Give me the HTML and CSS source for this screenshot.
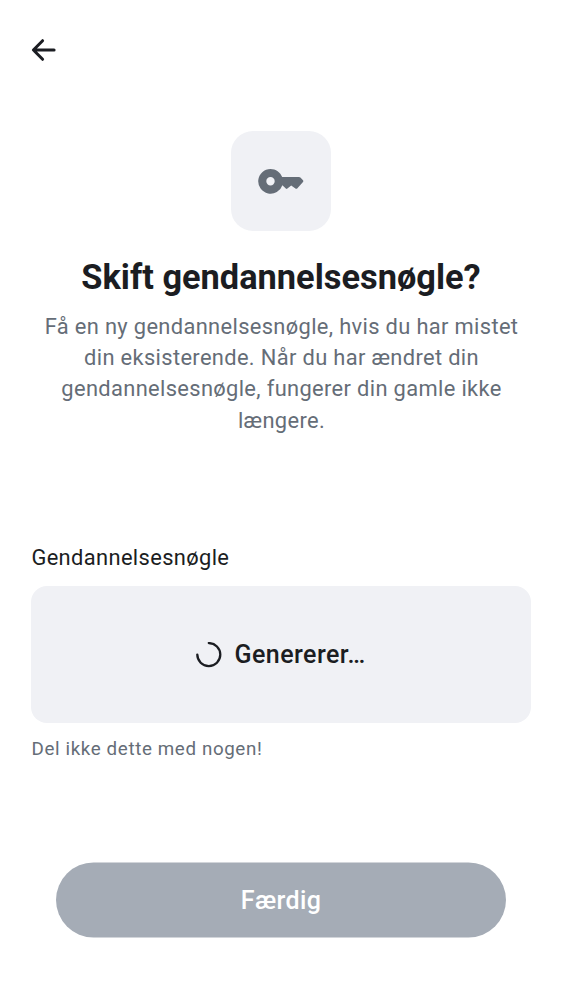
FILE: index.html
```html
<!DOCTYPE html>
<html lang="da">
<head>
<meta charset="utf-8">
<title>Gendannelsesnøgle</title>
<link rel="stylesheet" href="styles.css">
</head>
<body>
<main class="screen">
  <header class="topbar">
    <svg class="back" viewBox="0 0 25 24" aria-label="Tilbage"><path d="M11.6 2.7 2.4 12l9.2 9.3M2.6 12H23.1" fill="none" stroke="currentColor" stroke-width="3" stroke-linecap="round" stroke-linejoin="round"/></svg>
  </header>
  <section class="intro">
    <div class="tile">
      <svg class="key" viewBox="0 0 46 26"><path fill="currentColor" fill-rule="evenodd" d="M12.5.9C17.8.9 22.4 4.2 24.2 9H41Q41.8 9 42.4 9.6L45 12.2Q45.7 13.1 45 14L39.2 20.4Q38.3 21.3 37.4 20.4L33.2 17.4 29.4 20.6Q28.6 21.2 27.8 20.6L24.4 17.2A12.4 12.4 0 1 1 12.5.9Zm0 8.2a4.2 4.2 0 1 0 0 8.4 4.2 4.2 0 0 0 0-8.4Z"/></svg>
    </div>
    <h1 class="title">Skift gendannelsesnøgle?</h1>
    <p class="text">Få en ny gendannelsesnøgle, hvis du har mistet<br>din eksisterende. Når du har ændret din<br>gendannelsesnøgle, fungerer din gamle ikke<br>længere.</p>
  </section>
  <section class="field">
    <div class="label">Gendannelsesnøgle</div>
    <div class="box">
      <svg class="spinner" viewBox="0 0 26 26"><path d="M12.8 1.1A11.5 11.5 0 1 1 1.3 12.6" fill="none" stroke="currentColor" stroke-width="2.3" stroke-linecap="round"/></svg>
      <span class="status">Genererer…</span>
    </div>
    <div class="hint">Del ikke dette med nogen!</div>
  </section>
  <button class="done" disabled>Færdig</button>
</main>
</body>
</html>
```
FILE: styles.css
```css
* { box-sizing: border-box; }
body { margin: 0; background: #fff; color: #1b1d22; font-family: Roboto, sans-serif; }
.screen { height: 1000px; display: flex; flex-direction: column; padding: 0 31px; }
.topbar { height: 100px; display: flex; align-items: center; }
.back { width: 25px; height: 24px; }
.intro { display: flex; flex-direction: column; align-items: center; height: 337px; padding-top: 31px; text-align: center; }
.tile { width: 100px; height: 100px; border-radius: 22px; background: #f0f1f5; color: #656d77; display: flex; align-items: center; justify-content: center; }
.key { width: 46px; height: 26px; }
.title { margin: 25px 0 0; font-size: 34.375px; line-height: 43px; font-weight: 700; white-space: nowrap; }
.text { margin: 11.8px 0 0; padding-left: 1px; color: #656d77; font-size: 21.875px; line-height: 31.25px; letter-spacing: .35px; white-space: nowrap; }
.field { margin-top: 105px; }
.label { padding-left: .4px; font-size: 21.875px; line-height: 31px; letter-spacing: .37px; }
.box { height: 137px; margin-top: 13px; border-radius: 16px; background: #f0f1f5; display: flex; align-items: center; justify-content: center; gap: 12px; }
.spinner { width: 26px; height: 26px; }
.status { font-size: 25px; line-height: 37px; font-weight: 500; letter-spacing: .46px; }
.hint { margin-top: 13px; padding-left: .5px; color: #656d77; font-size: 18.75px; line-height: 27px; letter-spacing: .63px; }
.done { margin: 100px 25px 0; height: 75px; padding: 0; border: 0; border-radius: 38px; background: #a5acb6; color: #fff; font: 500 25px/37px Roboto, sans-serif; letter-spacing: .4px; transform: translateY(-.5px); }
```
